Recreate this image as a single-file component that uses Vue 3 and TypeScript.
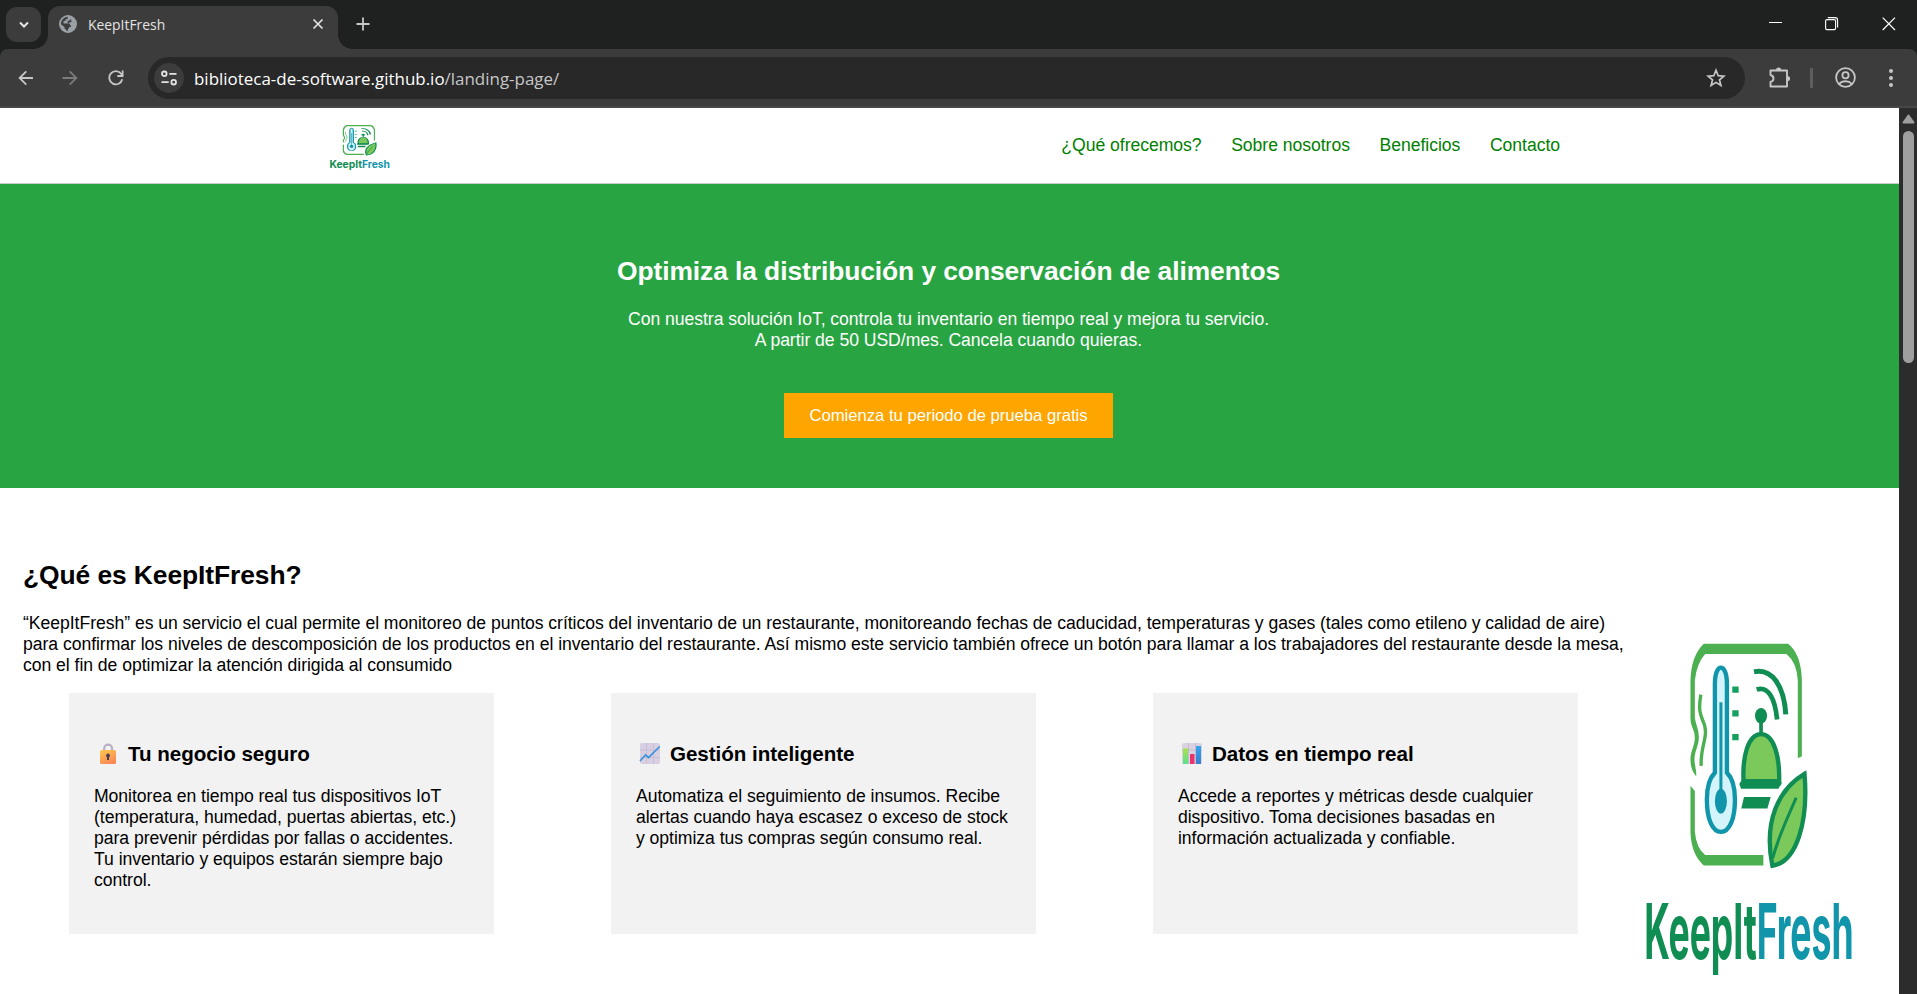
<script setup lang="ts">
import { defineComponent, h } from 'vue'

interface Feature {
  icon: 'lock' | 'trend' | 'bars'
  title: string
  text: string
}

const navLinks: string[] = ['¿Qué ofrecemos?', 'Sobre nosotros', 'Beneficios', 'Contacto']

const features: Feature[] = [
  {
    icon: 'lock',
    title: 'Tu negocio seguro',
    text: 'Monitorea en tiempo real tus dispositivos IoT (temperatura, humedad, puertas abiertas, etc.) para prevenir pérdidas por fallas o accidentes. Tu inventario y equipos estarán siempre bajo control.',
  },
  {
    icon: 'trend',
    title: 'Gestión inteligente',
    text: 'Automatiza el seguimiento de insumos. Recibe alertas cuando haya escasez o exceso de stock y optimiza tus compras según consumo real.',
  },
  {
    icon: 'bars',
    title: 'Datos en tiempo real',
    text: 'Accede a reportes y métricas desde cualquier dispositivo. Toma decisiones basadas en información actualizada y confiable.',
  },
]

const green = '#4caf50'
const dark = '#108d52'
const teal = '#1095aa'

// Brand mark shared by the header and the section; it stretches to its box.
const BrandLogo = defineComponent({
  render() {
    const line = (d: string, stroke: string, width: number, fill = 'none') =>
      h('path', { d, stroke, 'stroke-width': width, fill })
    return h('svg', { viewBox: '40 50 640 1030', preserveAspectRatio: 'none' }, [
      h('path', {
        fill: green,
        d: 'M503 412V180Q500 126 469 101H226Q201 128 195 180V290C198 312 207 325 207 350C207 375 194 390 194 415C194 435 201 448 199 466C186 450 182 435 182 415C182 390 195 375 195 350C195 325 182 320 182 290V180Q184 105 222 70H474Q512 100 515 175V406Z',
      }),
      h('path', {
        fill: green,
        d: 'M182 494L195 510V630Q199 680 226 701H400V732H222Q185 700 182 635Z',
      }),
      line('M213 222C204 272 213 285 223 310C236 350 211 375 214 435', green, 10),
      h('path', {
        fill: '#d3f4fb',
        stroke: teal,
        'stroke-width': 13,
        d: 'M255 455V190C255 125 291 125 291 190V455C306 470 315 498 315 535C315 595 298 632 273 632C248 632 231 595 231 535C231 498 240 470 255 455Z',
      }),
      line('M273 245V530', teal, 9),
      h('ellipse', { cx: 273, cy: 540, rx: 18, ry: 37, fill: teal }),
      line('M307 207H326M307 278H326M307 349H326', '#16a060', 19),
      line('M372 154C425 142 462 195 467 281', dark, 15),
      line('M380 207C415 195 435 235 441 296', dark, 14),
      h('ellipse', { cx: 393, cy: 285, rx: 18, ry: 23, fill: dark }),
      line('M393 285V340', dark, 11),
      h('path', {
        d: 'M341 486C336 405 355 340 393 340C431 340 450 405 447 486Z',
        fill: '#7bc85b',
        stroke: dark,
        'stroke-width': 13,
      }),
      h('path', { d: 'M338 474H446L455 485L445 503H333L328 488Z', fill: dark }),
      h('path', { d: 'M342 528H422L412 562H334Z', fill: dark }),
      h('path', {
        d: 'M523 459C445 505 400 600 427 733C500 722 535 600 523 459Z',
        fill: '#7bc85b',
        stroke: dark,
        'stroke-width': 13,
      }),
      line('M428 710C445 645 470 595 498 530', dark, 9),
      h('g', { transform: 'translate(44 1010) scale(0.4636 1)' }, [
        h(
          'text',
          { x: 0, y: 0, 'font-family': 'Inter, sans-serif', 'font-weight': 700, 'font-size': 230, textLength: 1350 },
          [h('tspan', { fill: dark }, 'KeepIt'), h('tspan', { fill: teal }, 'Fresh')],
        ),
      ]),
    ])
  },
})
</script>

<template>
  <div class="window">
    <div class="tabstrip">
      <div class="tab-search">
        <svg width="12" height="10" viewBox="0 0 12 10"><path d="M2 2.500l4 4 4-4" fill="none" stroke="#e3e3e3" stroke-width="2" /></svg>
      </div>
      <div class="tab">
        <svg class="globe" width="18" height="18" viewBox="0 0 18 18">
          <circle cx="9" cy="9" r="8.100" fill="#3c3c3c" stroke="#9aa0a6" stroke-width="1.800" />
          <path d="M9.500 .8L8.500 2.500V4.300H6.500V6H4.500V8.500H9.500Q11.200 8.500 11.200 10.200V12H9V14.500L8 17.200C13 17.500 17.200 13.500 17.200 9C17.200 4.500 13.500 1 9.500 .8Z" fill="#9aa0a6" />
          <path d="M1 8.500L5.500 12V13.500L7.500 15V17C3.500 16.500 .8 13 1 8.500Z" fill="#9aa0a6" />
          <path d="M11.500 4.500V6.500H9.500V8.500M12 11.200H9.200V13.500" fill="none" stroke="#3c3c3c" stroke-width="1.600" />
        </svg>
        <span class="tab-title">KeepItFresh</span>
        <svg class="tab-close" width="12" height="12" viewBox="0 0 12 12"><path d="M1.500 1.500l9 9M10.500 1.500l-9 9" stroke="#e3e3e3" stroke-width="1.700" /></svg>
      </div>
      <svg class="new-tab" width="14" height="14" viewBox="0 0 14 14"><path d="M7 .5v13M.5 7h13" stroke="#c7c7c7" stroke-width="1.800" /></svg>
      <div class="controls">
        <svg width="14" height="14" viewBox="0 0 14 14"><path d="M0 5.500h13" stroke="#fff" stroke-width="1" /></svg>
        <svg width="14" height="14" viewBox="0 0 14 14" fill="none" stroke="#fff" stroke-width="1.100"><rect x=".6" y="2.600" width="10" height="10" rx="1.300" /><path d="M2.800 .6H10Q12.600.6 12.600 3.200V10.500" /></svg>
        <svg width="14" height="14" viewBox="0 0 14 14"><path d="M.7.7l12.300 12.300M13 .7L.7 13" stroke="#fff" stroke-width="1.200" /></svg>
      </div>
    </div>

    <div class="toolbar">
      <svg class="back" width="16" height="16" viewBox="0 0 16 16" fill="none" stroke="#c7c7c7" stroke-width="1.800"><path d="M15 8H1.800M8.300 1.300L1.600 8l6.700 6.700" /></svg>
      <svg class="forward" width="16" height="16" viewBox="0 0 16 16" fill="none" stroke="#7b7b7b" stroke-width="1.800"><path d="M.5 8h13.700M7.700 1.300L14.400 8l-6.700 6.700" /></svg>
      <svg class="reload" width="16" height="16" viewBox="0 0 16 16" fill="none" stroke="#c7c7c7" stroke-width="1.800"><path d="M14.300 9.300A6.600 6.600 0 1 1 13.300 4L14.500 5.500M14.600 .5V6H9.300" /></svg>
      <div class="omnibox">
        <span class="site-info">
          <svg width="16" height="16" viewBox="0 0 16 16" fill="none" stroke="#e3e3e3" stroke-width="1.800"><circle cx="3.300" cy="3.800" r="2.300" /><path d="M8.300 3.800H15.500M.5 12.200H7.700" /><circle cx="12.700" cy="12.200" r="2.300" /></svg>
        </span>
        <span class="url">biblioteca-de-software.github.io<span class="url-path">/landing-page/</span></span>
        <svg class="star" width="20" height="20" viewBox="0 0 20 20"><path d="M10 2.300l2.200 5.400 5.700.4-4.400 3.700 1.400 5.700L10 14.400l-4.900 3.100 1.400-5.700L2.100 8.100l5.700-.4Z" fill="none" stroke="#c7c7c7" stroke-width="1.700" /></svg>
      </div>
      <svg class="puzzle" width="21" height="21" viewBox="0 0 21 21">
        <path d="M1.500 3.500H18V19.500H1.500V15C5.500 14 5.500 9 1.500 8Z" fill="none" stroke="#c7c7c7" stroke-width="1.900" stroke-linejoin="round" />
        <path d="M7 3a2.600 2.600 0 0 1 5.200 0ZM18.500 9a2.600 2.600 0 0 1 0 5.200Z" fill="#c7c7c7" />
      </svg>
      <span class="divider"></span>
      <svg class="profile" width="21" height="21" viewBox="0 0 21 21" fill="none" stroke="#c7c7c7" stroke-width="1.800"><circle cx="10.500" cy="10.500" r="9.400" /><circle cx="10.500" cy="8.200" r="3.100" /><path d="M4 17C7.500 13.300 13.500 13.300 17 17" /></svg>
      <svg class="more" width="4" height="20" viewBox="0 0 4 20" fill="#c7c7c7"><circle cx="2" cy="3" r="2" /><circle cx="2" cy="10" r="2" /><circle cx="2" cy="17" r="2" /></svg>
    </div>

    <div class="viewport">
      <div class="page">
        <header class="site-header">
          <BrandLogo class="logo-small" />
          <nav>
            <a v-for="link in navLinks" :key="link">{{ link }}</a>
          </nav>
        </header>

        <section class="hero">
          <h2>Optimiza la distribución y conservación de alimentos</h2>
          <p>Con nuestra solución IoT, controla tu inventario en tiempo real y mejora tu servicio.<br />A partir de 50 USD/mes. Cancela cuando quieras.</p>
          <a class="cta">Comienza tu periodo de prueba gratis</a>
        </section>

        <section class="about">
          <div class="about-main">
            <h2>¿Qué es KeepItFresh?</h2>
            <p>“KeepItFresh” es un servicio el cual permite el monitoreo de puntos críticos del inventario de un restaurante, monitoreando fechas de caducidad, temperaturas y gases (tales como etileno y calidad de aire) para confirmar los niveles de descomposición de los productos en el inventario del restaurante. Así mismo este servicio también ofrece un botón para llamar a los trabajadores del restaurante desde la mesa, con el fin de optimizar la atención dirigida al consumido</p>
            <div class="cards">
              <article v-for="feature in features" :key="feature.title" class="card">
                <h3>
                  <svg v-if="feature.icon === 'lock'" class="emoji" width="28" height="24" viewBox="0 0 28 24">
                    <defs><linearGradient id="lockBody" x1="0" y1="0" x2=".5" y2="1"><stop offset="0" stop-color="#fbc94b" /><stop offset="1" stop-color="#f98a57" /></linearGradient></defs>
                    <path d="M10.200 9V6.500a3.900 3.900 0 0 1 7.800 0V9" fill="none" stroke="#b8b0c2" stroke-width="2.200" />
                    <rect x="6" y="8" width="16" height="14" rx="1.500" fill="url(#lockBody)" />
                    <path d="M14 11.500a2 2 0 0 1 1 3.700V18h-2v-2.800a2 2 0 0 1 1-3.700Z" fill="#4b3a52" />
                  </svg>
                  <svg v-else-if="feature.icon === 'trend'" class="emoji" width="28" height="24" viewBox="0 0 28 24">
                    <rect x="4" y="1" width="20" height="21" rx="2" fill="#d9cfe3" />
                    <path d="M10.500 1v21M17.500 1v21M4 8h20M4 15.500h20" stroke="#c9bfd4" stroke-width="1" />
                    <path d="M4 19l5.500-6 3 2.500L23.700 4.500" fill="none" stroke="#3b92dd" stroke-width="1.700" />
                  </svg>
                  <svg v-else class="emoji" width="28" height="24" viewBox="0 0 28 24">
                    <defs>
                      <linearGradient id="barGreen" x1="0" y1="0" x2="0" y2="1"><stop offset="0" stop-color="#a9e04e" /><stop offset="1" stop-color="#5de08c" /></linearGradient>
                      <linearGradient id="barBlue" x1="0" y1="0" x2="0" y2="1"><stop offset="0" stop-color="#35a4f3" /><stop offset="1" stop-color="#3b7ccd" /></linearGradient>
                    </defs>
                    <rect x="4" y="1" width="20" height="21" rx="2" fill="#dad3e2" />
                    <path d="M10.500 1v21M17.500 1v21M4 8h20" stroke="#c4bccd" stroke-width="1" />
                    <rect x="5" y="6.500" width="5" height="15.500" fill="url(#barGreen)" />
                    <rect x="12" y="12" width="4.500" height="10" fill="#e8336f" />
                    <rect x="18" y="4" width="5" height="18" fill="url(#barBlue)" />
                  </svg>
                  {{ feature.title }}
                </h3>
                <p>{{ feature.text }}</p>
              </article>
            </div>
          </div>
          <BrandLogo class="logo-large" />
        </section>
      </div>
      <div class="scrollbar">
        <svg width="13" height="10" viewBox="0 0 13 10"><path d="M6.500 1.500L11.500 8.500H1.500Z" fill="#9f9f9f" stroke="#9f9f9f" stroke-width="2" stroke-linejoin="round" /></svg>
        <div class="thumb"></div>
      </div>
    </div>
  </div>
</template>

<style>
body {
  background: #1f2120;
  overflow: hidden;
}
</style>

<style scoped>
.window {
  width: 1917px;
  height: 994px;
  display: flex;
  flex-direction: column;
  overflow: hidden;
  background: #1f2120;
}
svg {
  display: block;
  flex: none;
}
.tabstrip {
  height: 49px;
  flex: none;
  display: flex;
  box-sizing: border-box;
  padding: 6px 21px 0 6px;
}
.tab-search {
  width: 35px;
  height: 35px;
  margin-top: 1px;
  border-radius: 11px;
  background: #3c3c3c;
  display: flex;
  align-items: center;
  justify-content: center;
}
.tab {
  position: relative;
  width: 290px;
  height: 43px;
  margin-left: 7px;
  box-sizing: border-box;
  padding: 0 14px 7px 11px;
  border-radius: 12px 12px 0 0;
  background: #3c3c3c;
  display: flex;
  align-items: center;
}
.tab::before,
.tab::after {
  content: '';
  position: absolute;
  bottom: 0;
  width: 14px;
  height: 14px;
}
.tab::before {
  left: -14px;
  background: radial-gradient(circle at 0 0, transparent 13.5px, #3c3c3c 14px);
}
.tab::after {
  right: -14px;
  background: radial-gradient(circle at 14px 0, transparent 13.5px, #3c3c3c 14px);
}
.tab-title {
  margin-left: 11px;
  padding-top: 1px;
  flex: 1;
  font: 13.900px/20px 'Open Sans', sans-serif;
  color: #e3e3e3;
}
.new-tab {
  margin: 11px 0 0 18px;
}
.controls {
  margin: 11px 0 0 auto;
  display: flex;
  gap: 43px;
}
.controls svg:first-child {
  margin-right: -1px;
}
.toolbar {
  height: 59px;
  flex: none;
  box-sizing: border-box;
  padding: 0 24px 0 18px;
  display: flex;
  align-items: center;
  background: #3c3c3c;
  border-bottom: 2px solid #474747;
  border-radius: 8px 8px 0 0;
}
.forward {
  margin-left: 28px;
}
.reload {
  margin-left: 30px;
}
.omnibox {
  width: 1597px;
  height: 42px;
  margin-left: 24px;
  box-sizing: border-box;
  padding: 0 19px 0 6px;
  border-radius: 21px;
  background: #282828;
  display: flex;
  align-items: center;
}
.site-info {
  width: 30px;
  height: 30px;
  border-radius: 50%;
  background: #3c3c3c;
  display: flex;
  align-items: center;
  justify-content: center;
}
.url {
  margin-left: 10px;
  padding-top: 2px;
  flex: 1;
  font: 16.950px/24px 'Open Sans', sans-serif;
  color: #fff;
}
.url-path {
  color: #c7c7c7;
}
.puzzle {
  margin-left: 24px;
}
.divider {
  width: 3px;
  height: 20px;
  margin-left: 20px;
  border-radius: 1px;
  background: #5e5e5e;
}
.profile {
  margin-left: 22px;
}
.more {
  margin-left: auto;
}
.viewport {
  flex: 1;
  min-height: 0;
  display: flex;
}
.page {
  width: 1899px;
  overflow: hidden;
  background: #fff;
  color: #000;
  font: 17.600px/21px 'Liberation Sans', Arial, sans-serif;
  letter-spacing: -0.040px;
}
h2,
h3,
p {
  margin: 0;
}
h2 {
  font-size: 26.400px;
  line-height: 30px;
  letter-spacing: -0.080px;
}
.site-header {
  height: 76px;
  box-sizing: border-box;
  padding: 0 339px 0 329px;
  border-bottom: 1px solid #ccc;
  display: flex;
  justify-content: space-between;
  align-items: flex-start;
}
.logo-small {
  width: 62px;
  height: 47px;
  margin-top: 16px;
}
nav {
  display: flex;
  gap: 29.600px;
  margin-top: 27px;
  color: #008000;
}
.hero {
  height: 304px;
  box-sizing: border-box;
  padding: 72px 2px 0 0;
  background: #28a542;
  color: #fff;
  display: flex;
  flex-direction: column;
  align-items: center;
  text-align: center;
}
.hero p {
  margin-top: 23px;
}
.cta {
  width: 329px;
  margin-top: 42px;
  background: #ffa500;
  font-size: 16.720px;
  line-height: 45px;
}
.about {
  padding: 72px 0 0 23px;
  display: flex;
}
.about-main {
  width: 1605px;
}
.about-main > p {
  margin-top: 23px;
}
.cards {
  display: flex;
  gap: 117px;
  margin: 17px 0 0 46px;
}
.card {
  width: 425px;
  height: 241px;
  flex: none;
  box-sizing: border-box;
  padding: 49px 25px 0;
  background: #f2f2f2;
}
.card h3 {
  display: flex;
  gap: 6px;
  font-size: 20.600px;
  line-height: 24px;
  letter-spacing: -0.050px;
}
.card p {
  margin-top: 20px;
}
.logo-large {
  width: 214px;
  height: 345px;
  margin: 76.500px 0 0 15.300px;
}
.scrollbar {
  width: 18px;
  background: #2c2c2c;
  display: flex;
  flex-direction: column;
  align-items: center;
  padding-top: 6px;
}
.thumb {
  width: 11px;
  height: 232px;
  margin-top: 7px;
  border-radius: 6px;
  background: #9f9f9f;
}
</style>
